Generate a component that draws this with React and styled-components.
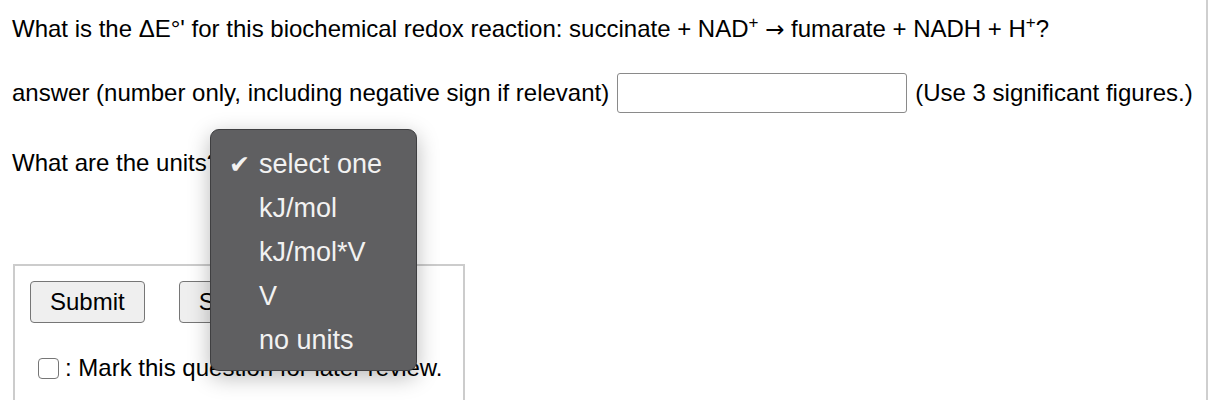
import React from "react";
import styled, { createGlobalStyle } from "styled-components";

const GlobalStyle = createGlobalStyle`
  html, body {
    margin: 0;
    padding: 0;
    background: #fff;
  }
  body {
    font-family: "Liberation Sans", Arial, sans-serif;
    color: #000;
  }
`;

const units = ["select one", "kJ/mol", "kJ/mol*V", "V", "no units"];

const App = () => {
  return (
    <>
      <GlobalStyle />
      <Page>
        <Question>
          What is the ΔE°' for this biochemical redox reaction: succinate + NAD<Sup>+</Sup> <Arrow>→</Arrow> fumarate + NADH + H<Sup>+</Sup>?
        </Question>

        <AnswerRow>
          <span>answer (number only, including negative sign if relevant)</span>
          <AnswerInput type="text" />
          <span>(Use 3 significant figures.)</span>
        </AnswerRow>

        <UnitsRow>
          <span>What are the units?</span>
          <UnitsSelect>
            <option>select one</option>
          </UnitsSelect>
        </UnitsRow>

        <ActionBox>
          <ButtonRow>
            <Button>Submit</Button>
            <Button>Save</Button>
          </ButtonRow>
          <ReviewRow>
            <Checkbox type="checkbox" />
            <span>: Mark this question for later review.</span>
          </ReviewRow>
        </ActionBox>

        <Menu>
          {units.map((u, i) => (
            <MenuItem key={u}>
              <Check>{i === 0 ? "✔" : ""}</Check>
              {u}
            </MenuItem>
          ))}
        </Menu>
      </Page>
    </>
  );
};

export default App;

const Page = styled.div`
  position: relative;
  width: 1206px;
  height: 400px;
  border-right: 2px solid #cfcfcf;
  overflow: hidden;
  font-size: 24px;
`;

const Question = styled.p`
  margin: 0;
  padding: 15px 0 0 12px;
  line-height: 27px;
  white-space: nowrap;
`;

const Sup = styled.sup`
  font-size: 17px;
  line-height: 0;
  vertical-align: 9px;
`;

const Arrow = styled.span`
  font-family: "DejaVu Sans", sans-serif;
  font-size: 23px;
`;

const AnswerRow = styled.div`
  display: flex;
  align-items: center;
  gap: 8px;
  margin-top: 30px;
  padding-left: 12px;
  height: 40px;
  white-space: nowrap;
`;

const AnswerInput = styled.input`
  box-sizing: border-box;
  width: 290px;
  height: 40px;
  border: 1px solid #8a8a8a;
  border-radius: 3px;
  background: #fff;
  font-size: 20px;
`;

const UnitsRow = styled.div`
  display: flex;
  align-items: center;
  gap: 6px;
  margin-top: 29px;
  padding-left: 12px;
  height: 42px;
`;

const UnitsSelect = styled.select`
  font-family: inherit;
  font-size: 20px;
  height: 36px;
  width: 180px;
`;

const ActionBox = styled.div`
  box-sizing: border-box;
  margin: 80px 0 0 13px;
  width: 452px;
  height: 160px;
  border: 2px solid #cccccc;
  padding: 15px 0 0 15px;
`;

const ButtonRow = styled.div`
  display: flex;
  gap: 34px;
`;

const Button = styled.button`
  box-sizing: border-box;
  height: 42px;
  padding: 0 19px;
  font-family: inherit;
  font-size: 24px;
  color: #000;
  background: #efefef;
  border: 1px solid #767676;
  border-radius: 4px;
`;

const ReviewRow = styled.div`
  display: flex;
  align-items: center;
  gap: 6px;
  margin-top: 31px;
  padding-left: 8px;
  white-space: nowrap;
`;

const Checkbox = styled.input`
  appearance: none;
  box-sizing: border-box;
  width: 21px;
  height: 21px;
  margin: 0;
  border: 1.5px solid #767676;
  border-radius: 4px;
  background: #fff;
`;

const Menu = styled.div`
  position: absolute;
  left: 210px;
  top: 129px;
  box-sizing: border-box;
  width: 207px;
  height: 242px;
  padding-top: 12px;
  background: #5f5f61;
  border: 1px solid #3f3f41;
  border-radius: 9px;
  box-shadow: 0 6px 22px rgba(0, 0, 0, 0.28);
  font-family: "Liberation Sans", Arial, sans-serif;
  font-size: 27px;
  color: #f2f2f2;
`;

const MenuItem = styled.div`
  display: flex;
  align-items: center;
  height: 44px;
  padding-left: 18px;
`;

const Check = styled.span`
  width: 30px;
  font-size: 25px;
  font-family: "DejaVu Sans", sans-serif;
`;
